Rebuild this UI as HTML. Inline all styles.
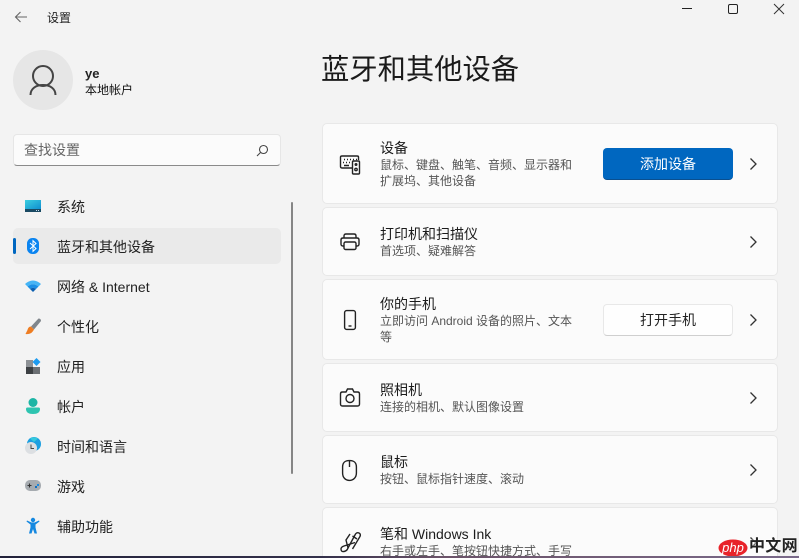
<!DOCTYPE html>
<html lang="zh"><head><meta charset="utf-8">
<style>
html,body{margin:0;padding:0;width:799px;height:558px;overflow:hidden;background:#f3f3f3}
body{position:relative;font-family:"Liberation Sans","Noto Sans CJK SC",sans-serif;color:#1b1b1b}
.t{position:absolute;white-space:nowrap;line-height:18px}
.nav{font-size:14px;left:57px;color:#222}
.card{position:absolute;left:322px;width:454px;background:#fbfbfb;border:1px solid #e8e8e8;border-radius:5px;box-sizing:content-box}
.h{font-size:14px;left:380px;color:#1b1b1b}
.s{font-size:12px;left:380px;color:#555;line-height:17px}
svg{position:absolute;overflow:visible}
.i{fill:none;stroke:#222;stroke-width:1.4}
.ch{fill:none;stroke:#333;stroke-width:1.3}
</style></head><body>

<svg style="left:14px;top:11px" width="14" height="12"><path d="M13 6H1.500M6.500 1L1.500 6l5 5" fill="none" stroke="#666" stroke-width="1.100"/></svg>
<div class="t" style="left:47px;top:9px;font-size:12px;color:#222">设置</div>

<svg style="left:682px;top:4px" width="100" height="14"><path d="M0 4.500h10" stroke="#222" stroke-width="1"/><rect x="46.500" y="0.500" width="9" height="9" rx="1.500" fill="none" stroke="#222" stroke-width="1"/><path d="M92 0l10 10M102 0L92 10" stroke="#333" stroke-width="1"/></svg>

<div style="position:absolute;left:13px;top:50px;width:60px;height:60px;border-radius:50%;background:#e6e6e6"></div>
<svg style="left:29px;top:64px" width="28" height="32"><circle cx="14" cy="12" r="10" fill="none" stroke="#444" stroke-width="2"/><path d="M1.500 31c0-6 5-10 12.500-10s12.500 4 12.500 10" fill="none" stroke="#444" stroke-width="2"/></svg>
<div class="t" style="left:85px;top:65px;font-size:13px;font-weight:bold;color:#222">ye</div>
<div class="t" style="left:85px;top:81px;font-size:12px;color:#111">本地帐户</div>

<div style="position:absolute;left:13px;top:134px;width:268px;height:32px;box-sizing:border-box;background:#fbfbfb;border:1px solid #e6e6e6;border-bottom:1px solid #8a8a8a;border-radius:4px"></div>
<div class="t" style="left:24px;top:141px;font-size:14px;color:#666">查找设置</div>
<svg style="left:256px;top:144px" width="13" height="13"><circle cx="7.500" cy="5.500" r="4" fill="none" stroke="#444" stroke-width="1.100"/><path d="M4.500 8.500L1 12" stroke="#444" stroke-width="1.100"/></svg>

<div style="position:absolute;left:13px;top:228px;width:268px;height:36px;background:#eaeaea;border-radius:5px"></div>
<div style="position:absolute;left:13px;top:238px;width:3px;height:16px;background:#0067c0;border-radius:2px"></div>
<div style="position:absolute;left:291px;top:202px;width:2px;height:272px;background:#858585;border-radius:1px"></div>

<svg style="left:25px;top:200px" width="16" height="13"><defs><linearGradient id="a" x1="0" y1="0" x2="1" y2="1"><stop offset="0" stop-color="#3ccfe0"/><stop offset="1" stop-color="#0f8fd0"/></linearGradient></defs><rect width="16" height="9" fill="url(#a)"/><rect y="9" width="16" height="3" fill="#1a4a63"/><rect x="11" y="10" width="1" height="1" fill="#cde"/><rect x="13" y="10" width="1" height="1" fill="#cde"/></svg>
<div class="t nav" style="top:198px">系统</div>

<svg style="left:27px;top:238px" width="12" height="16"><rect width="12" height="16" rx="5.500" fill="#0a84f0"/><path d="M3 5l6 5.500-3 2.800V2.700l3 2.800-6 5.500" fill="none" stroke="#fff" stroke-width="1"/></svg>
<div class="t nav" style="top:238px">蓝牙和其他设备</div>

<svg style="left:25px;top:280px" width="16" height="13"><path d="M0 4Q8-3 16 4L13.500 6.500Q8 2 2.500 6.500Z" fill="#45b4f5"/><path d="M2.500 6.500Q8 2 13.500 6.500L11 9Q8 6.500 5 9Z" fill="#1a8fe6"/><path d="M5 9Q8 6.500 11 9L8 12Z" fill="#0b5fb0"/></svg>
<div class="t nav" style="top:278px">网络 &amp; Internet</div>

<svg style="left:25px;top:318px" width="16" height="17"><path d="M13.500 .5L6 8.500l3 3L16 3Q16 .5 13.500 .5Z" fill="#80868c"/><path d="M6 8.500c-2 0-3 1.500-3.500 3.500L.5 16c3.500 .5 6.500-.5 8.500-4.500Z" fill="#ee7d22"/></svg>
<div class="t nav" style="top:318px">个性化</div>

<svg style="left:26px;top:358px" width="15" height="16"><rect y="2" width="7" height="7" fill="#8d9195"/><rect y="9" width="7" height="7" fill="#3c4043"/><rect x="7" y="9" width="7" height="7" fill="#6c7074"/><path d="M10.500 0l4 4-4 4-4-4Z" fill="#1d9bf0"/></svg>
<div class="t nav" style="top:358px">应用</div>

<svg style="left:26px;top:398px" width="14" height="17"><circle cx="7" cy="4.500" r="4.500" fill="#1cb5a5"/><path d="M0 11q0-1.500 1.500-1.500h11q1.500 0 1.500 1.500 0 5-7 5t-7-5Z" fill="#2ec4b0"/></svg>
<div class="t nav" style="top:398px">帐户</div>

<svg style="left:25px;top:437px" width="16" height="17"><circle cx="9" cy="7" r="7" fill="#1c9fe0"/><path d="M5 1.500a7 7 0 0 1 8 0L9 5Z" fill="#35c9dc"/><circle cx="6" cy="11" r="6" fill="#dcdfe2"/><path d="M6 7.500v4h3" fill="none" stroke="#444" stroke-width="1"/></svg>
<div class="t nav" style="top:438px">时间和语言</div>

<svg style="left:25px;top:480px" width="16" height="12"><rect y="0" width="16" height="11" rx="5" fill="#a6abb0"/><path d="M2.500 5.500h4M4.500 3.500v4" stroke="#333" stroke-width="1.100"/><rect x="10" y="6" width="2" height="2" fill="#0e6fc4"/><rect x="12" y="4" width="2" height="2" fill="#1a8ae0"/></svg>
<div class="t nav" style="top:478px">游戏</div>

<svg style="left:26px;top:518px" width="14" height="16"><circle cx="7" cy="2" r="2.200" fill="#1588e0"/><path d="M.500 3.500L4.500 6.500v3L3 15.500h2.500L7 11l1.500 4.500H11L9.500 9.500v-3L13.500 3.500 13 2.500 8.500 4.500h-3L1 2.500Z" fill="#1588e0"/></svg>
<div class="t nav" style="top:518px">辅助功能</div>

<div class="t" style="left:321px;top:51px;font-size:28.3px;line-height:36px;color:#1a1a1a">蓝牙和其他设备</div>

<div class="card" style="top:123px;height:79px"></div>
<div class="card" style="top:207px;height:67px"></div>
<div class="card" style="top:279px;height:79px"></div>
<div class="card" style="top:363px;height:67px"></div>
<div class="card" style="top:435px;height:67px"></div>
<div class="card" style="top:507px;height:70px"></div>

<svg class="i" style="left:340px;top:155px" width="21" height="20"><path d="M12 13H2q-1.500 0-1.500-1.500V2Q.5 1 2 1h15q1.500 0 1.500 1v3"/><rect x="12.500" y="6" width="7" height="13" rx="1"/><path d="M4 4.500h1M7 4.500h1M10 4.500h1M13 4.500h1M16 4.500h1M3 7.500h1M6 7.500h1M9 7.500h1M4 10.500h5"/><circle cx="16" cy="9.500" r=".8"/><circle cx="16" cy="14.500" r="1.200"/></svg>
<div class="t h" style="top:139px">设备</div>
<div class="t s" style="top:157px">鼠标、键盘、触笔、音频、显示器和</div>
<div class="t s" style="top:173px">扩展坞、其他设备</div>
<div style="position:absolute;left:603px;top:148px;width:130px;height:32px;background:#0067c0;border-bottom:1px solid #0a4f8f;box-sizing:border-box;border-radius:4px;color:#fff;font-size:14px;line-height:33px;text-align:center">添加设备</div>

<svg class="i" style="left:340px;top:233px" width="20" height="18"><path d="M4 5V3q0-2 2-2h8q2 0 2 2v2"/><path d="M4 13H3q-2 0-2-2V7q0-2 2-2h14q2 0 2 2v4q0 2-2 2h-1"/><rect x="4" y="9" width="12" height="7.500" rx="1.500"/></svg>
<div class="t h" style="top:225px">打印机和扫描仪</div>
<div class="t s" style="top:243px">首选项、疑难解答</div>

<svg class="i" style="left:344px;top:310px" width="12" height="20"><rect x=".6" y=".6" width="10.800" height="18.800" rx="2"/><path d="M4.500 16h3"/></svg>
<div class="t h" style="top:295px">你的手机</div>
<div class="t s" style="top:313px">立即访问 Android 设备的照片、文本</div>
<div class="t s" style="top:329px">等</div>
<div style="position:absolute;left:603px;top:304px;width:130px;height:32px;background:#fefefe;border:1px solid #e8e8e8;border-bottom-color:#cfcfcf;box-sizing:border-box;border-radius:4px;color:#222;font-size:14px;line-height:31px;text-align:center">打开手机</div>

<svg class="i" style="left:340px;top:388px" width="20" height="19"><path d="M2.500 4H6l1.500-3h5L14 4h3.500Q19.500 4 19.500 6v10q0 2-2 2h-15q-2 0-2-2V6q0-2 2-2Z"/><circle cx="10" cy="10.500" r="4"/></svg>
<div class="t h" style="top:381px">照相机</div>
<div class="t s" style="top:399px">连接的相机、默认图像设置</div>

<svg class="i" style="left:342px;top:460px" width="15" height="21"><path d="M.6 7C.6 3 3 .6 7 .6h1c4 0 6.400 2.400 6.400 6.400v6c0 4.500-3 7.400-7 7.400s-6.800-2.900-6.800-7.400Z"/><path d="M7.500 .6V7"/></svg>
<div class="t h" style="top:453px">鼠标</div>
<div class="t s" style="top:471px">按钮、鼠标指针速度、滚动</div>

<svg class="i" style="left:340px;top:531px" width="21" height="22"><path d="M8 17L15.500 3q1.500-2 3.500-1t1 3.500L12.500 18"/><path d="M12.500 5l4.500 3M10 3 6 9 8 17q-1 3-4 3.500T1 18q0-2 3-3l11-3.500"/></svg>
<div class="t h" style="top:525px">笔和 Windows Ink</div>
<div class="t s" style="top:543px">右手或左手、笔按钮快捷方式、手写</div>

<svg class="ch" style="left:750px;top:158px" width="7" height="12"><path d="M.5.500l5.500 5.500-5.500 5.500"/></svg>
<svg class="ch" style="left:750px;top:236px" width="7" height="12"><path d="M.5.500l5.500 5.500-5.500 5.500"/></svg>
<svg class="ch" style="left:750px;top:314px" width="7" height="12"><path d="M.5.500l5.500 5.500-5.500 5.500"/></svg>
<svg class="ch" style="left:750px;top:392px" width="7" height="12"><path d="M.5.500l5.500 5.500-5.500 5.500"/></svg>
<svg class="ch" style="left:750px;top:464px" width="7" height="12"><path d="M.5.500l5.500 5.500-5.500 5.500"/></svg>
<svg class="ch" style="left:750px;top:537px" width="7" height="12"><path d="M.5.500l5.500 5.500-5.500 5.500"/></svg>

<svg style="left:718px;top:539px" width="30" height="18"><ellipse cx="15" cy="9" rx="14.500" ry="8.500" fill="#e8232a"/><text x="15" y="13" text-anchor="middle" font-family="Liberation Sans" font-style="italic" font-size="13" fill="#fff">php</text></svg>
<div class="t" style="left:749px;top:538px;font-size:16px;font-weight:bold;color:#222;letter-spacing:.3px;text-shadow:0 0 2px #fff">中文网</div>

<div style="position:absolute;left:0;top:556px;width:799px;height:2px;background:linear-gradient(90deg,#22223a 0%,#33304a 40%,#6b5268 55%,#7a6a8a 100%)"></div>
</body></html>
